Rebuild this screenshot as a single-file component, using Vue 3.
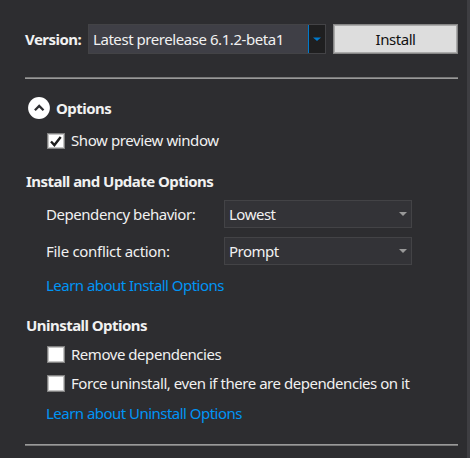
<script setup>
import { ref } from 'vue'

const preview = ref(true)
const selects = [
  { label: 'Dependency behavior:', value: 'Lowest', cls: 'dep' },
  { label: 'File conflict action:', value: 'Prompt', cls: 'conflict' },
]
const checks = [
  { label: 'Remove dependencies', cls: 'remove' },
  { label: 'Force uninstall, even if there are dependencies on it', cls: 'force' },
]
</script>

<template>
  <main class="panel">
    <section class="version-row">
      <span class="bold version-label">Version:</span>
      <div class="version-combo">
        <span class="version-value">Latest prerelease 6.1.2-beta1</span>
        <span class="drop">
          <svg width="8" height="4" viewBox="0 0 8 4"><path d="M0 0.4H8L4 4Z" fill="#007acc" /></svg>
        </span>
      </div>
      <button class="install"><span>Install</span></button>
    </section>
    <div class="rule top"></div>
    <section class="options-head">
      <svg width="22" height="22" viewBox="0 0 22 22">
        <circle cx="11" cy="11" r="10.9" fill="#fff" />
        <path d="M6.9 13.3L11.2 9L15.5 13.3" fill="none" stroke="#2d2d30" stroke-width="2.3" />
      </svg>
      <span class="bold options-title">Options</span>
    </section>
    <label class="check-row preview">
      <span class="box">
        <svg v-if="preview" width="14" height="13" viewBox="0 0 14 13">
          <path d="M2 6.5L5.4 10.1L11.7 2.1" fill="none" stroke="#1e1e1e" stroke-width="2.4" />
        </svg>
      </span>
      <span class="check-text">Show preview window</span>
    </label>
    <h2 class="bold install-title"><span>Install and Update Options</span></h2>
    <div v-for="s in selects" :key="s.label" class="select-row" :class="s.cls">
      <span class="select-label"><span>{{ s.label }}</span></span>
      <div class="combo">
        <span>{{ s.value }}</span>
        <svg width="8" height="4" viewBox="0 0 8 4"><path d="M0 0H8L4 4Z" fill="#999" /></svg>
      </div>
    </div>
    <a class="link first"><span>Learn about Install Options</span></a>
    <h2 class="bold uninstall-title"><span>Uninstall Options</span></h2>
    <label v-for="c in checks" :key="c.label" class="check-row" :class="c.cls">
      <span class="box"></span>
      <span class="check-text">{{ c.label }}</span>
    </label>
    <a class="link second"><span>Learn about Uninstall Options</span></a>
    <div class="rule bottom"></div>
  </main>
</template>

<style>
body {
  margin: 0;
  background: #2d2d30;
}
</style>

<style scoped>
.panel {
  box-sizing: border-box;
  width: 470px;
  height: 458px;
  padding: 24px 9px 0 25px;
  overflow: hidden;
  background: #2d2d30;
  border-right: 3px solid #3e3e42;
  color: #f1f1f1;
  font: 15px/20px "Noto Sans", "Open Sans", sans-serif;
  white-space: nowrap;
}
.bold {
  margin: 0;
  font-size: 15px;
  font-weight: 700;
  letter-spacing: -0.54px;
}
.version-row {
  display: flex;
  align-items: center;
  height: 30px;
}
.version-label {
  width: 63px;
}
.version-combo {
  box-sizing: border-box;
  display: flex;
  justify-content: space-between;
  align-items: center;
  width: 238px;
  height: 30px;
  padding-left: 4px;
  border: 1px solid #434346;
  background: #3f3f46;
}
.version-value {
  letter-spacing: -0.44px;
}
.drop {
  display: flex;
  align-items: center;
  justify-content: center;
  width: 16px;
  height: 28px;
  border-left: 1px solid #007acc;
  background: #1f1f20;
}
.install {
  box-sizing: border-box;
  width: 125px;
  height: 30px;
  margin-left: 7px;
  padding: 0;
  border: 1px solid #868686;
  box-shadow: inset 0 0 0 1px #aaa;
  background: #ddd;
  color: #111;
  font: inherit;
  letter-spacing: -0.45px;
}
.rule {
  width: 433px;
  height: 1px;
  border-top: 1px solid #777;
  background: #999;
}
.rule.top {
  margin-top: 23px;
}
.options-head {
  display: flex;
  align-items: center;
  gap: 6px;
  height: 22px;
  margin-top: 18px;
  padding-left: 3px;
}
.check-row {
  display: flex;
  align-items: center;
  gap: 6px;
  height: 17px;
  padding-left: 22px;
  letter-spacing: -0.46px;
}
.check-row.preview {
  height: 16px;
  margin-top: 14px;
  letter-spacing: -0.4px;
}
.check-text {
  margin-bottom: 2px;
}
.box {
  box-sizing: border-box;
  display: flex;
  align-items: center;
  justify-content: center;
  width: 18px;
  height: 100%;
  border: 1px solid #808080;
  box-shadow: inset 0 0 0 1px #c4c4c4;
  background: #fff;
}
.install-title {
  height: 20px;
  margin: 22px 0 0 1px;
}
.select-row {
  display: flex;
  align-items: center;
  height: 28px;
  margin-top: 9px;
  padding-left: 21px;
}
.select-label {
  width: 178px;
  letter-spacing: -0.45px;
}
.select-row.conflict .select-label {
  letter-spacing: -0.3px;
}
.combo {
  box-sizing: border-box;
  display: flex;
  justify-content: space-between;
  align-items: center;
  width: 188px;
  height: 28px;
  padding: 0 4px;
  border: 1px solid #434346;
  background: #333337;
  letter-spacing: -0.5px;
}
.link {
  display: block;
  height: 20px;
  margin-left: 21px;
  color: #0094f5;
  letter-spacing: -0.53px;
}
.link.first {
  margin-top: 10px;
}
.uninstall-title {
  height: 20px;
  margin: 20px 0 0 1px;
}
.remove {
  margin-top: 11px;
}
.force {
  margin-top: 12px;
}
.link.second {
  margin-top: 11px;
}
.rule.bottom {
  margin-top: 21px;
  border-color: #999;
  background: #777;
}
</style>
